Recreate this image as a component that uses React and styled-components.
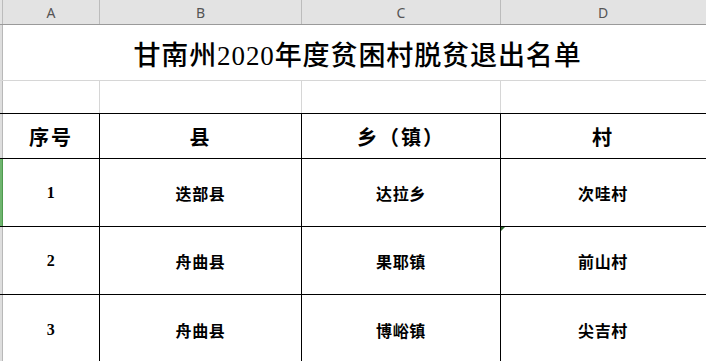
import styled, { createGlobalStyle } from 'styled-components'

const GlobalStyle = createGlobalStyle`
  html, body {
    margin: 0;
    padding: 0;
    background: #ffffff;
    overflow: hidden;
  }
`

const COLUMNS = '3px 97px 202px 199px 1fr'
const CJK = '"Liberation Serif", "Noto Sans CJK SC", serif'

const Sheet = styled.div`
  width: 706px;
  height: 361px;
  overflow: hidden;
  background: #ffffff;
  font-family: ${CJK};
  color: #000;
`

const ColumnBar = styled.div`
  display: grid;
  grid-template-columns: ${COLUMNS};
  height: 25px;
  box-sizing: border-box;
  background: #e3e3e3;
  border-bottom: 1px solid #9a9a9a;
`

const ColumnLabel = styled.div`
  display: flex;
  align-items: center;
  justify-content: center;
  box-sizing: border-box;
  border-right: 1px solid ${(p) => (p.$last ? 'transparent' : '#bcbcbc')};
  font-family: "Noto Sans", "Liberation Sans", sans-serif;
  font-size: 14px;
  color: #555;
  padding-top: 1px;
`

const Row = styled.div`
  display: grid;
  grid-template-columns: ${COLUMNS};
  height: ${(p) => p.$h}px;
  box-sizing: border-box;
  border-bottom: 1px solid ${(p) => p.$line};
`

const RowHead = styled.div`
  box-sizing: border-box;
  background: ${(p) => (p.$active ? '#6fb56f' : '#dedede')};
  border-right: 1px solid ${(p) => (p.$active ? '#4f9a4f' : '#b8b8b8')};
`

const Title = styled.div`
  grid-column: 2 / span 4;
  display: flex;
  align-items: center;
  justify-content: center;
  font-size: 27px;
  font-weight: 500;
  letter-spacing: 0.9px;
  padding-left: 6px;
  padding-top: 2px;
`

const Cell = styled.div`
  position: relative;
  display: flex;
  align-items: center;
  justify-content: center;
  box-sizing: border-box;
  border-right: 1px solid ${(p) => (p.$last ? 'transparent' : p.$line)};
  font-size: ${(p) => (p.$head ? 20 : 16)}px;
  font-weight: 700;
  letter-spacing: ${(p) => (p.$head ? 2 : 0.6)}px;
`

const FillMark = styled.span`
  position: absolute;
  right: -5px;
  bottom: -5px;
  width: 0;
  height: 0;
  border-top: 4px solid #2f6a2f;
  border-right: 4px solid transparent;
  z-index: 2;
`

const rows = [
  ['1', '迭部县', '达拉乡', '次哇村'],
  ['2', '舟曲县', '果耶镇', '前山村'],
  ['3', '舟曲县', '博峪镇', '尖吉村'],
]

export default function App() {
  return (
    <>
      <GlobalStyle />
      <Sheet>
        <ColumnBar>
          <ColumnLabel />
          <ColumnLabel>A</ColumnLabel>
          <ColumnLabel>B</ColumnLabel>
          <ColumnLabel>C</ColumnLabel>
          <ColumnLabel $last>D</ColumnLabel>
        </ColumnBar>

        <Row $h={56} $line="#d6d6d6">
          <RowHead />
          <Title>甘南州2020年度贫困村脱贫退出名单</Title>
        </Row>

        <Row $h={33} $line="#000">
          <RowHead />
          <Cell $line="#d6d6d6" />
          <Cell $line="#d6d6d6" />
          <Cell $line="#d6d6d6" />
          <Cell $last />
        </Row>

        <Row $h={45} $line="#000">
          <RowHead />
          <Cell $head $line="#000">序号</Cell>
          <Cell $head $line="#000">县</Cell>
          <Cell $head $line="#000">乡（镇）</Cell>
          <Cell $head $last>村</Cell>
        </Row>

        {rows.map((r, i) => (
          <Row key={r[0]} $h={i === 2 ? 70 : 68} $line="#000">
            <RowHead $active={i === 0} />
            <Cell $line="#000">{r[0]}</Cell>
            <Cell $line="#000">{r[1]}</Cell>
            <Cell $line="#000">
              {r[2]}
              {i === 0 && <FillMark />}
            </Cell>
            <Cell $last>{r[3]}</Cell>
          </Row>
        ))}
      </Sheet>
    </>
  )
}
